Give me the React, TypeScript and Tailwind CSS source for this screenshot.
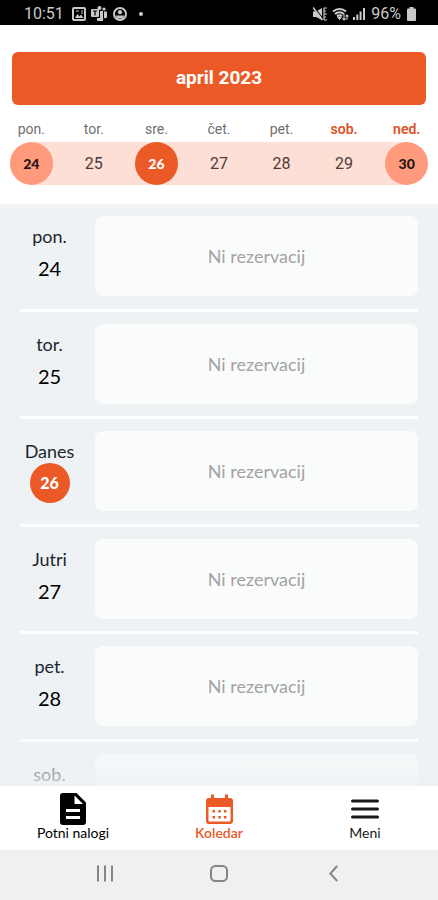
import React from "react";

type WeekDay = { name: string; day: number; kind: "plain" | "edge" | "today"; weekend?: boolean };

const week: WeekDay[] = [
  { name: "pon.", day: 24, kind: "edge" },
  { name: "tor.", day: 25, kind: "plain" },
  { name: "sre.", day: 26, kind: "today" },
  { name: "čet.", day: 27, kind: "plain" },
  { name: "pet.", day: 28, kind: "plain" },
  { name: "sob.", day: 29, kind: "plain", weekend: true },
  { name: "ned.", day: 30, kind: "edge", weekend: true },
];

const agenda = [
  { label: "pon.", day: 24 },
  { label: "tor.", day: 25 },
  { label: "Danes", day: 26, today: true },
  { label: "Jutri", day: 27 },
  { label: "pet.", day: 28 },
];

const dayStyles = {
  plain: "font-['Roboto',sans-serif] text-base text-[#4a3d39]",
  edge: "bg-[#ff9a7d] font-['Lato',sans-serif] text-sm font-black text-[#241512]",
  today: "bg-[#eb5a26] font-['Lato',sans-serif] text-sm font-black text-white",
};

function StatusBar() {
  return (
    <div className="flex h-[25px] shrink-0 items-center justify-between bg-black pt-[2px] pr-[22px] pl-6 font-['Roboto',sans-serif] text-base text-[#c9c9c9]">
      <div className="flex items-center">
        <span>10:51</span>
        <svg className="ml-2 size-[14px]" viewBox="0 0 14 14" aria-hidden="true">
          <rect x="1" y="1" width="12" height="12" rx="1" fill="none" stroke="currentColor" strokeWidth="2" />
          <path d="M3 11l2.5-4 2 2.500L9 7.500 11.500 11z" fill="currentColor" />
          <path d="M4 4h3M10 3v4" stroke="currentColor" />
        </svg>
        <svg className="ml-[5px] h-[15px] w-4" viewBox="0 0 16 15" fill="currentColor" aria-hidden="true">
          <rect y="3" width="8" height="8" rx="1" />
          <circle cx="8.500" cy="2" r="2" />
          <circle cx="13" cy="3" r="1.600" />
          <path d="M9 5h3v7a3 3 0 0 1-6 2v-2h3zM13 5.500h3V10a2 2 0 0 1-3 2z" />
          <path d="M2 5h4M4 5v4.500" stroke="#000" strokeWidth="1.200" />
        </svg>
        <svg className="ml-[6px] size-[14px]" viewBox="0 0 14 14" aria-hidden="true">
          <circle cx="7" cy="7" r="6" fill="none" stroke="currentColor" strokeWidth="2" />
          <circle cx="7" cy="5.200" r="2.100" fill="currentColor" />
          <path d="M2.800 8.500h8.400L10 11.500H4z" fill="currentColor" />
        </svg>
        <span className="ml-3 size-1 rounded-full bg-[#c9c9c9]" />
      </div>
      <div className="flex items-center">
        <svg className="h-[14px] w-[14px]" viewBox="0 0 14 14" aria-hidden="true">
          <path d="M0 4.500h3L9 1v12L3 10H0z" fill="currentColor" />
          <path d="M1 0l10 13" stroke="#000" strokeWidth="1.200" />
          <path d="M0 0.500l9.500 12.500" stroke="currentColor" strokeWidth="1.500" />
          <path d="M10.500 1H14M10.500 4H13M10.500 7H14M10.500 10H13M11 13h3M11 1v12" stroke="currentColor" strokeWidth="1.200" />
        </svg>
        <svg className="ml-[5px] h-[14px] w-[17px]" viewBox="0 0 17 14" fill="none" stroke="currentColor" aria-hidden="true">
          <path d="M1 4.500a10 10 0 0 1 13 0M3 7a7 7 0 0 1 9 0M5 9.300a4 4 0 0 1 5 0" strokeWidth="2" />
          <path d="M5.500 10l2 2.500 2-2.500z" fill="currentColor" />
          <path d="M12 7v6m-1.500-1.500L12 13l1.500-1.500M15 13V8m-1.500 1.500L15 8l1.500 1.500" strokeWidth="1.100" />
        </svg>
        <svg className="ml-1 h-[14px] w-3" viewBox="0 0 12 14" fill="currentColor" aria-hidden="true">
          <path d="M0 10h2v3H0zM3.300 7.500h2V13h-2zM6.600 4.500h2V13h-2zM10 1h2v12h-2z" />
        </svg>
        <span className="ml-[6px]">96%</span>
        <svg className="ml-[6px] h-[14px] w-[9px]" viewBox="0 0 9 14" fill="currentColor" aria-hidden="true">
          <path d="M2.500 0h4v1.500H8a1 1 0 0 1 1 1V13a1 1 0 0 1-1 1H1a1 1 0 0 1-1-1V2.500a1 1 0 0 1 1-1h1.500z" />
        </svg>
      </div>
    </div>
  );
}

function WeekStrip() {
  return (
    <table className="w-full table-fixed border-collapse text-center">
      <thead>
        <tr>
          {week.map((d) => (
            <th
              key={d.name}
              scope="col"
              className={`h-[37px] p-0 pt-[10px] font-['Roboto',sans-serif] text-sm ${
                d.weekend ? "font-semibold text-[#dd5227]" : "font-normal text-[#6f6f6f]"
              }`}
            >
              {d.name}
            </th>
          ))}
        </tr>
      </thead>
      <tbody>
        <tr>
          {week.map((d, i) => (
            <td
              key={d.day}
              className={`p-0 ${
                i === 0
                  ? "bg-linear-to-r from-transparent from-50% to-[#fddfd5] to-50%"
                  : i === 6
                    ? "bg-linear-to-l from-transparent from-50% to-[#fddfd5] to-50%"
                    : "bg-[#fddfd5]"
              }`}
            >
              <button className={`mx-auto flex size-[43px] items-center justify-center rounded-full ${dayStyles[d.kind]}`}>
                {d.day}
              </button>
            </td>
          ))}
        </tr>
      </tbody>
    </table>
  );
}

function Agenda() {
  return (
    <main className="relative flex min-h-0 flex-1 flex-col overflow-hidden bg-[#eef2f5] px-5 shadow-[inset_0_4px_4px_-2px_#f8f9fa]">
      <ul className="grid h-[538px] shrink-0 grid-rows-5">
        {agenda.map((row) => (
          <li key={row.day} className="flex items-start gap-4 border-b-[3px] border-white pt-3">
            <div className="flex w-[59px] shrink-0 flex-col items-center pt-2 font-['Lato',sans-serif] text-[#20262b]">
              <span className="text-lg leading-6">{row.label}</span>
              {row.today ? (
                <span className="flex size-10 items-center justify-center rounded-full bg-[#eb5a26] text-base font-black text-white">
                  {row.day}
                </span>
              ) : (
                <span className="text-xl leading-10 text-black">{row.day}</span>
              )}
            </div>
            <div className="flex h-20 flex-1 items-center justify-center rounded-lg bg-[#fafbfb] font-['Lato',sans-serif] text-lg text-[#a3a3a3]">
              Ni rezervacij
            </div>
          </li>
        ))}
      </ul>
      <div className="flex min-h-0 flex-1 gap-4 pt-3">
        <div className="w-[59px] pt-2 text-center font-['Lato',sans-serif] text-lg leading-6 text-[#20262b]">sob.</div>
        <div className="flex-1 rounded-t-lg bg-[#fafbfb]" />
      </div>
      <div className="pointer-events-none absolute inset-x-0 bottom-0 h-[60px] bg-linear-to-b from-[#eef2f5]/0 to-[#eef2f5]/80" />
    </main>
  );
}

function TabBar() {
  const tab = "flex flex-col items-center justify-start pt-[7px] font-['Lato',sans-serif] text-sm leading-4";
  return (
    <nav className="grid h-16 shrink-0 grid-cols-3 bg-white">
      <a href="#nalogi" className={`${tab} text-black`}>
        <svg className="h-8 w-[26px]" viewBox="0 0 26 32" aria-hidden="true">
          <path d="M3 0h13.500L26 9.500V29a3 3 0 0 1-3 3H3a3 3 0 0 1-3-3V3a3 3 0 0 1 3-3z" fill="currentColor" />
          <path d="M14.500 2.500v8.500H23z" fill="#fff" />
          <path d="M6 17.500h14M6 24.500h14" stroke="#fff" strokeWidth="3" />
        </svg>
        <span>Potni nalogi</span>
      </a>
      <a href="#koledar" className={`${tab} font-semibold text-[#eb5a26]`} aria-current="page">
        <svg className="h-8 w-[27px]" viewBox="0 0 27 32" aria-hidden="true">
          <path d="M5 1.500h3V5h11V1.500h3V5h2a3 3 0 0 1 3 3v20a3 3 0 0 1-3 3H3a3 3 0 0 1-3-3V8a3 3 0 0 1 3-3h2z" fill="currentColor" />
          <path d="M2.500 14h22v13.500a1 1 0 0 1-1 1h-20a1 1 0 0 1-1-1z" fill="#fff" />
          <path d="M6.500 17h2.500v2.500H6.500zM12.250 17h2.500v2.500h-2.500zM18 17h2.500v2.500H18zM6.500 23h2.500v2.500H6.500zM12.250 23h2.500v2.500h-2.500zM18 23h2.500v2.500H18z" fill="currentColor" />
        </svg>
        <span>Koledar</span>
      </a>
      <a href="#meni" className={`${tab} text-[#1a1a1a]`}>
        <svg className="h-8 w-[28px]" viewBox="0 0 28 32" aria-hidden="true">
          <path d="M1.500 8h25M1.500 16h25M1.500 24h25" stroke="currentColor" strokeWidth="3" strokeLinecap="round" />
        </svg>
        <span>Meni</span>
      </a>
    </nav>
  );
}

function SystemNav() {
  const item = "flex items-center justify-center text-[#858585]";
  return (
    <div className="grid h-[50px] shrink-0 grid-cols-3 bg-[#f0f0f0] px-12 pb-1">
      <button className={item} aria-label="Nedavno">
        <svg className="h-[17px] w-4" viewBox="0 0 16 17" stroke="currentColor" strokeWidth="2" aria-hidden="true">
          <path d="M1 0.500v16M8 0.500v16M15 0.500v16" />
        </svg>
      </button>
      <button className={item} aria-label="Domov">
        <svg className="h-[17px] w-[18px]" viewBox="0 0 18 17" fill="none" stroke="currentColor" strokeWidth="2" aria-hidden="true">
          <rect x="1" y="1" width="16" height="15" rx="4.500" />
        </svg>
      </button>
      <button className={item} aria-label="Nazaj">
        <svg className="h-[17px] w-[9px]" viewBox="0 0 9 17" fill="none" stroke="currentColor" strokeWidth="2" aria-hidden="true">
          <path d="M8.200 1L1.300 8.500l6.900 7.500" />
        </svg>
      </button>
    </div>
  );
}

export default function App() {
  return (
    <div className="flex h-screen flex-col overflow-hidden bg-white">
      <StatusBar />
      <header className="shrink-0 pt-[27px] pb-[19px]">
        <div className="px-3">
          <button className="flex h-[53px] w-full items-center justify-center rounded-md bg-[#eb5a26] font-['Roboto',sans-serif] text-[19px] font-bold text-white">
            april 2023
          </button>
        </div>
        <WeekStrip />
      </header>
      <Agenda />
      <TabBar />
      <SystemNav />
    </div>
  );
}
